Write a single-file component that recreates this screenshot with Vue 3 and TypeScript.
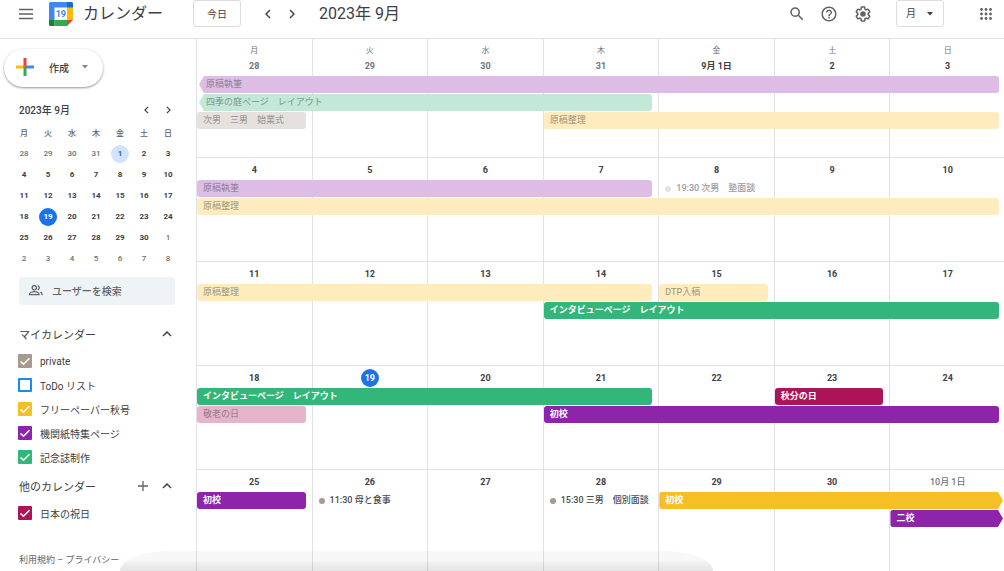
<script setup lang="ts">
import { ref } from 'vue'

type Tone = 'purple' | 'green' | 'taupe' | 'yellow' | 'pink' | 'crimson'

interface CalEvent {
  title: string
  tone: Tone
  start: number
  span: number
  lane: number
  past?: boolean
  timed?: boolean
  fromBefore?: boolean
  toAfter?: boolean
}

interface Week {
  days: string[]
  events: CalEvent[]
}

interface CalendarEntry {
  id: string
  name: string
  tone: Tone | 'blue'
  checked: boolean
}

const weekdays = ['月', '火', '水', '木', '金', '土', '日']

const weeks: Week[] = [
  {
    days: ['28', '29', '30', '31', '9月 1日', '2', '3'],
    events: [
      { title: '原稿執筆', tone: 'purple', start: 1, span: 7, lane: 1, past: true, fromBefore: true },
      { title: '四季の庭ページ　レイアウト', tone: 'green', start: 1, span: 4, lane: 2, past: true, fromBefore: true },
      { title: '次男　三男　始業式', tone: 'taupe', start: 1, span: 1, lane: 3, past: true },
      { title: '原稿整理', tone: 'yellow', start: 4, span: 4, lane: 3, past: true },
    ],
  },
  {
    days: ['4', '5', '6', '7', '8', '9', '10'],
    events: [
      { title: '原稿執筆', tone: 'purple', start: 1, span: 4, lane: 1, past: true },
      { title: '19:30 次男　塾面談', tone: 'taupe', start: 5, span: 1, lane: 1, past: true, timed: true },
      { title: '原稿整理', tone: 'yellow', start: 1, span: 7, lane: 2, past: true },
    ],
  },
  {
    days: ['11', '12', '13', '14', '15', '16', '17'],
    events: [
      { title: '原稿整理', tone: 'yellow', start: 1, span: 4, lane: 1, past: true },
      { title: 'DTP入稿', tone: 'yellow', start: 5, span: 1, lane: 1, past: true },
      { title: 'インタビューページ　レイアウト', tone: 'green', start: 4, span: 4, lane: 2 },
    ],
  },
  {
    days: ['18', '19', '20', '21', '22', '23', '24'],
    events: [
      { title: 'インタビューページ　レイアウト', tone: 'green', start: 1, span: 4, lane: 1 },
      { title: '秋分の日', tone: 'crimson', start: 6, span: 1, lane: 1 },
      { title: '敬老の日', tone: 'pink', start: 1, span: 1, lane: 2, past: true },
      { title: '初校', tone: 'purple', start: 4, span: 4, lane: 2 },
    ],
  },
  {
    days: ['25', '26', '27', '28', '29', '30', '10月 1日'],
    events: [
      { title: '初校', tone: 'purple', start: 1, span: 1, lane: 1 },
      { title: '11:30 母と食事', tone: 'taupe', start: 2, span: 1, lane: 1, timed: true },
      { title: '15:30 三男　個別面談', tone: 'taupe', start: 4, span: 1, lane: 1, timed: true },
      { title: '初校', tone: 'yellow', start: 5, span: 3, lane: 1, toAfter: true },
      { title: '二校', tone: 'purple', start: 7, span: 1, lane: 2, toAfter: true },
    ],
  },
]

const miniWeeks: number[][] = [
  [28, 29, 30, 31, 1, 2, 3],
  [4, 5, 6, 7, 8, 9, 10],
  [11, 12, 13, 14, 15, 16, 17],
  [18, 19, 20, 21, 22, 23, 24],
  [25, 26, 27, 28, 29, 30, 1],
  [2, 3, 4, 5, 6, 7, 8],
]

const myCalendars = ref<CalendarEntry[]>([
  { id: 'private', name: 'private', tone: 'taupe', checked: true },
  { id: 'todo', name: 'ToDo リスト', tone: 'blue', checked: false },
  { id: 'freepaper', name: 'フリーペーパー秋号', tone: 'yellow', checked: true },
  { id: 'bulletin', name: '機関紙特集ページ', tone: 'purple', checked: true },
  { id: 'memorial', name: '記念誌制作', tone: 'green', checked: true },
])

const otherCalendars = ref<CalendarEntry[]>([
  { id: 'holidays', name: '日本の祝日', tone: 'crimson', checked: true },
])

const view = ref('month')
const query = ref('')

function isOutside(week: number, day: number): boolean {
  return (week === 0 && day > 20) || (week >= 4 && day < 10)
}

function isFirst(week: number, day: number): boolean {
  return week === 0 && day === 1
}

function isToday(week: number, day: number): boolean {
  return week === 3 && day === 19
}

function placement(e: CalEvent) {
  return { gridColumn: `${e.start} / span ${e.span}`, gridRow: e.lane + 1 }
}
</script>

<template>
  <div class="app">
    <header class="topbar">
      <div class="brand">
        <button class="icon-btn" aria-label="メインメニュー">
          <svg width="14" height="12" viewBox="0 0 14 12"><path d="M0 1.500h14M0 6h14M0 10.500h14" stroke="#5f6368" stroke-width="1.600" /></svg>
        </button>
        <svg class="logo" width="24" height="24" viewBox="0 0 24 24" aria-hidden="true">
          <path d="M1.500 0H18v6H6v12H0V1.500A1.500 1.500 0 0 1 1.500 0z" fill="#4285f4" />
          <path d="M18 0h4.500A1.500 1.500 0 0 1 24 1.500V6h-6z" fill="#1967d2" />
          <path d="M18 5.500h6V18h-6z" fill="#fbbc04" />
          <path d="M5.500 18H18v6H5.500z" fill="#34a853" />
          <path d="M0 18h5.500v6h-4A1.500 1.500 0 0 1 0 22.500z" fill="#188038" />
          <path d="M18 18h6l-6 6z" fill="#ea4335" />
          <path d="M5.500 5.500H18V18H5.500z" fill="#fff" />
          <text x="11.800" y="15" text-anchor="middle" class="logo-day">19</text>
        </svg>
        <span class="brand-name">カレンダー</span>
      </div>
      <button class="outlined today-btn">今日</button>
      <div class="pager">
        <button class="icon-btn" aria-label="前の月">
          <svg width="6" height="10" viewBox="0 0 6 10"><path d="M5 1 1 5l4 4" class="chev" /></svg>
        </button>
        <button class="icon-btn" aria-label="次の月">
          <svg width="6" height="10" viewBox="0 0 6 10"><path d="M1 1l4 4-4 4" class="chev" /></svg>
        </button>
      </div>
      <h1 class="period">2023年 9月</h1>
      <div class="tools">
        <button class="icon-btn" aria-label="検索">
          <svg width="18" height="18" viewBox="0 0 24 24"><path fill="#5f6368" d="M20.490 19l-5.730-5.730C15.530 12.200 16 10.910 16 9.500A6.500 6.500 0 1 0 9.500 16c1.410 0 2.700-.47 3.770-1.240L19 20.490 20.490 19zM5 9.500C5 7.010 7.010 5 9.500 5S14 7.010 14 9.500 11.990 14 9.500 14 5 11.990 5 9.500z" /></svg>
        </button>
        <button class="icon-btn help" aria-label="サポート">
          <svg width="18" height="18" viewBox="0 0 24 24"><path fill="#5f6368" d="M11 18h2v-2h-2v2zm1-16C6.480 2 2 6.480 2 12s4.480 10 10 10 10-4.480 10-10S17.520 2 12 2zm0 18c-4.410 0-8-3.590-8-8s3.590-8 8-8 8 3.590 8 8-3.590 8-8 8zm0-14c-2.210 0-4 1.790-4 4h2c0-1.100.9-2 2-2s2 .9 2 2c0 2-3 1.750-3 5h2c0-2.250 3-2.500 3-5 0-2.210-1.790-4-4-4z" /></svg>
        </button>
        <button class="icon-btn settings" aria-label="設定">
          <svg width="18" height="18" viewBox="0 0 24 24"><path fill="#5f6368" d="M13.850 22.250h-3.700c-.74 0-1.360-.54-1.450-1.270l-.27-1.890c-.27-.14-.53-.29-.79-.46l-1.800.72c-.7.26-1.470-.03-1.810-.65L2.200 15.530c-.35-.66-.2-1.440.36-1.880l1.530-1.190c-.01-.15-.02-.3-.02-.46 0-.15.01-.31.02-.46l-1.520-1.190c-.59-.45-.74-1.260-.37-1.880l1.850-3.190c.34-.62 1.110-.9 1.790-.63l1.810.73c.26-.17.52-.32.78-.46l.27-1.910c.09-.7.71-1.250 1.440-1.250h3.700c.74 0 1.360.54 1.450 1.270l.27 1.890c.27.14.53.29.79.46l1.800-.72c.71-.26 1.480.03 1.820.65l1.840 3.180c.36.66.2 1.440-.36 1.880l-1.520 1.190c.01.15.02.3.02.46s-.01.31-.02.46l1.520 1.190c.56.45.72 1.230.37 1.860l-1.860 3.220c-.34.62-1.110.9-1.800.63l-1.800-.72c-.26.17-.52.32-.78.46l-.27 1.910c-.1.680-.72 1.220-1.460 1.220zm-3.230-2h2.760l.37-2.550.53-.22c.44-.18.880-.44 1.340-.78l.45-.34 2.380.96 1.380-2.400-2.030-1.580.07-.56c.03-.26.06-.51.06-.78s-.03-.53-.06-.78l-.07-.56 2.030-1.580-1.390-2.400-2.390.96-.45-.35c-.42-.32-.87-.58-1.330-.77l-.52-.22-.37-2.550h-2.760l-.37 2.550-.53.21c-.44.19-.88.44-1.340.79l-.45.33-2.380-.95-1.390 2.390 2.030 1.580-.07.56a7 7 0 0 0-.06.79c0 .26.02.53.06.78l.07.56-2.030 1.580 1.380 2.400 2.390-.96.45.35c.43.33.86.58 1.330.77l.53.22.38 2.550z" /><circle cx="12" cy="12" r="3.700" fill="#5f6368" /></svg>
        </button>
        <div class="view-picker">
          <select v-model="view" class="outlined" aria-label="表示形式">
            <option value="month">月</option>
            <option value="week">週</option>
          </select>
          <svg class="caret" width="6" height="4" viewBox="0 0 6 4"><path d="M0 0h6L3 3.500z" fill="#3c4043" /></svg>
        </div>
        <button class="icon-btn apps" aria-label="アプリ">
          <svg width="12" height="12" viewBox="0 0 12 12" fill="#5f6368">
            <template v-for="r in 3" :key="r">
              <circle v-for="c in 3" :key="c" :cx="c * 4.5 - 3" :cy="r * 4.5 - 3" r="1.400" />
            </template>
          </svg>
        </button>
      </div>
    </header>

    <div class="body">
      <aside class="sidebar">
        <button class="create">
          <svg width="18" height="18" viewBox="0 0 18 18" aria-hidden="true">
            <path d="M7.500 0h3v9h-3z" fill="#ea4335" />
            <path d="M9 7.500h9v3H9z" fill="#4285f4" />
            <path d="M7.500 9h3v9h-3z" fill="#34a853" />
            <path d="M0 7.500h10.500l-3 3H0z" fill="#fbbc04" />
            <path d="M7.500 7.500h3l-3 3z" fill="#ea4335" />
          </svg>
          <span>作成</span>
          <svg width="6" height="4" viewBox="0 0 6 4"><path d="M0 0h6L3 3.500z" fill="#80868b" /></svg>
        </button>

        <div class="mini-head">
          <h2>2023年 9月</h2>
          <button class="icon-btn" aria-label="前月">
            <svg width="5" height="8" viewBox="0 0 6 10"><path d="M5 1 1 5l4 4" class="chev" /></svg>
          </button>
          <button class="icon-btn" aria-label="翌月">
            <svg width="5" height="8" viewBox="0 0 6 10"><path d="M1 1l4 4-4 4" class="chev" /></svg>
          </button>
        </div>
        <table class="mini">
          <thead>
            <tr><th v-for="d in weekdays" :key="d" scope="col">{{ d }}</th></tr>
          </thead>
          <tbody>
            <tr v-for="(week, w) in miniWeeks" :key="w">
              <td v-for="day in week" :key="day">
                <button :class="{ outside: isOutside(w, day), first: isFirst(w, day), today: isToday(w, day) }">{{ day }}</button>
              </td>
            </tr>
          </tbody>
        </table>

        <label class="people">
          <svg width="16" height="16" viewBox="0 0 24 24" fill="none" stroke="#5f6368" stroke-width="1.900" aria-hidden="true">
            <circle cx="9.500" cy="7" r="3.200" />
            <path d="M2.500 17.500v-1.200c0-2 4-3.300 7-3.300s7 1.300 7 3.300v1.200z" />
            <path d="M14.500 3.900a3.200 3.200 0 0 1 0 6.200M18.500 13.500c1.500.7 2.500 1.600 2.500 2.800v2.200" />
          </svg>
          <input v-model="query" type="text" placeholder="ユーザーを検索" aria-label="ユーザーを検索" />
        </label>

        <section class="group">
          <div class="group-head">
            <h3>マイカレンダー</h3>
            <button class="icon-btn" aria-label="マイカレンダーを閉じる">
              <svg width="10" height="6" viewBox="0 0 10 6"><path d="M1 5l4-4 4 4" class="chev" /></svg>
            </button>
          </div>
          <ul>
            <li v-for="c in myCalendars" :key="c.id">
              <label>
                <span class="box" :class="c.tone">
                  <input v-model="c.checked" type="checkbox" />
                  <svg v-if="c.checked" width="14" height="14" viewBox="0 0 14 14"><path d="M2.500 7.500l3 2.700 6-6" /></svg>
                </span>
                {{ c.name }}
              </label>
            </li>
          </ul>
        </section>

        <section class="group other">
          <div class="group-head">
            <h3>他のカレンダー</h3>
            <button class="icon-btn" aria-label="他のカレンダーを追加">
              <svg width="10" height="10" viewBox="0 0 10 10"><path d="M5 0v10M0 5h10" class="plus" /></svg>
            </button>
            <button class="icon-btn" aria-label="他のカレンダーを閉じる">
              <svg width="10" height="6" viewBox="0 0 10 6"><path d="M1 5l4-4 4 4" class="chev" /></svg>
            </button>
          </div>
          <ul>
            <li v-for="c in otherCalendars" :key="c.id">
              <label>
                <span class="box" :class="c.tone">
                  <input v-model="c.checked" type="checkbox" />
                  <svg v-if="c.checked" width="14" height="14" viewBox="0 0 14 14"><path d="M2.500 7.500l3 2.700 6-6" /></svg>
                </span>
                {{ c.name }}
              </label>
            </li>
          </ul>
        </section>

        <footer class="legal"><a href="#terms">利用規約</a> – <a href="#privacy">プライバシー</a></footer>
      </aside>

      <main class="month">
        <div class="names">
          <span v-for="d in weekdays" :key="d">{{ d }}</span>
        </div>
        <div v-for="(week, w) in weeks" :key="w" class="week">
          <div v-for="(day, i) in week.days" :key="day" class="cell" :style="{ gridColumn: i + 1 }">
            <span
              class="date"
              :class="{
                today: w === 3 && i === 1,
                faded: (w === 0 && i < 4) || (w === 4 && i === 6),
              }"
            >{{ day }}</span>
          </div>
          <button
            v-for="(e, k) in week.events"
            :key="'e' + k"
            class="event"
            :class="[e.tone, { past: e.past, timed: e.timed, before: e.fromBefore, after: e.toAfter }]"
            :style="placement(e)"
          >
            <i v-if="e.timed" class="dot"></i>{{ e.title }}
          </button>
        </div>
      </main>
    </div>
    <div class="dock-shade" aria-hidden="true"></div>
  </div>
</template>

<style>
body {
  margin: 0;
  background: #fff;
}
</style>

<style scoped>
.app {
  position: relative;
  display: flex;
  flex-direction: column;
  min-height: 100vh;
  overflow: hidden;
  font-family: Roboto, "Noto Sans CJK JP", sans-serif;
  font-size: 10px;
  color: #3c4043;
}
.app *,
.app {
  box-sizing: border-box;
}
button,
input,
select {
  font: inherit;
  color: inherit;
}
button {
  padding: 0;
  border: 0;
  background: none;
  cursor: pointer;
}
svg {
  display: block;
  flex: none;
}
h1,
h2,
h3,
ul {
  margin: 0;
  padding: 0;
  font-weight: 400;
  list-style: none;
}
.icon-btn {
  display: grid;
  place-items: center;
  flex: none;
  width: 24px;
  height: 24px;
}
.chev {
  fill: none;
  stroke: #444746;
  stroke-width: 1.500;
}
.plus {
  fill: none;
  stroke: #5f6368;
  stroke-width: 1.300;
}

.topbar {
  display: flex;
  align-items: center;
  height: 39px;
  padding-bottom: 11px;
  border-bottom: 1px solid #dfe1e8;
}
.brand {
  display: flex;
  align-items: center;
  flex: none;
  width: 193px;
  padding-left: 14px;
}
.logo {
  margin: 0 10px 0 11px;
}
.logo-day {
  font: 700 9px Roboto, sans-serif;
  fill: #4285f4;
}
.brand-name {
  font-size: 16px;
  line-height: 24px;
  color: #3c4043;
}
.outlined {
  width: 48px;
  height: 27px;
  border: 1px solid #dadce0;
  border-radius: 3px;
  background: #fff;
}
.today-btn {
  flex: none;
}
.pager {
  display: flex;
  margin-left: 15px;
}
.period {
  margin-left: 15px;
  font-size: 16px;
  line-height: 24px;
  white-space: nowrap;
}
.tools {
  display: flex;
  align-items: center;
  margin-left: auto;
  padding-right: 6px;
}
.help {
  margin-left: 8px;
}
.settings {
  margin-left: 10px;
}
.view-picker {
  display: grid;
  align-items: center;
  margin: 0 30px 0 21px;
}
.view-picker > * {
  grid-area: 1 / 1;
}
.view-picker select {
  appearance: none;
  padding: 0 9px;
}
.caret {
  justify-self: end;
  margin-right: 11px;
  pointer-events: none;
}

.body {
  display: flex;
  flex: 1;
}
.sidebar {
  flex: none;
  width: 196px;
}
.create {
  display: flex;
  align-items: center;
  width: 99px;
  height: 38px;
  margin: 10px 0 0 4px;
  padding: 0 0 2px 12px;
  border-radius: 19px;
  background: #fff;
  box-shadow: 0 1px 2px rgba(60, 64, 67, 0.4), 0 1px 3px rgba(60, 64, 67, 0.2);
  font-weight: 500;
}
.create span {
  margin: 0 13px 0 15px;
}
.mini-head {
  display: flex;
  align-items: center;
  height: 21px;
  margin: 12px 0 2px;
  padding: 0 17px 0 19px;
}
.mini-head h2 {
  flex: 1;
  font-size: 10px;
  font-weight: 500;
}
.mini-head .icon-btn {
  width: 22px;
}
.mini {
  width: 168px;
  margin-left: 12px;
  border-collapse: collapse;
  table-layout: fixed;
  font-size: 8px;
  text-align: center;
}
.mini th,
.mini td {
  height: 21px;
  padding: 0;
  font-weight: 500;
}
.mini th {
  color: #5f6368;
}
.mini button {
  width: 18px;
  height: 18px;
  border-radius: 50%;
  font-weight: 700;
  line-height: 18px;
  vertical-align: middle;
}
.mini .outside {
  color: #6b6f73;
  font-weight: 500;
}
.mini .first {
  background: #d2e3fc;
  color: #1967d2;
}
.mini .today {
  background: #1a73e8;
  color: #fff;
}
.people {
  display: flex;
  align-items: center;
  height: 28px;
  margin: 8px 21px 0 19px;
  padding: 0 9px;
  border-radius: 3px;
  background: #eef3f6;
}
.people input {
  flex: 1;
  min-width: 0;
  margin-left: 8px;
  padding: 0;
  border: 0;
  outline: 0;
  background: none;
  font-weight: 500;
}
.people input::placeholder {
  color: #5f6368;
  opacity: 1;
}
.group {
  margin-top: 17px;
}
.group.other {
  margin-top: 5px;
}
.group-head {
  display: flex;
  align-items: center;
  height: 24px;
  padding: 0 17px 0 19px;
  margin-bottom: 3px;
}
.group-head h3 {
  flex: 1;
  font-size: 11px;
}
.group li label {
  display: flex;
  align-items: center;
  gap: 8px;
  height: 24px;
  padding-left: 18px;
}
.box {
  display: grid;
  width: 14px;
  height: 14px;
}
.box > * {
  grid-area: 1 / 1;
}
.box input {
  appearance: none;
  width: 14px;
  height: 14px;
  margin: 0;
  border: 2px solid var(--tone);
  border-radius: 1px;
}
.box input:checked {
  background: var(--tone);
}
.box svg {
  fill: none;
  stroke: #fff;
  stroke-width: 1.600;
  pointer-events: none;
}
.legal {
  margin: 27px 0 0 19px;
  font-size: 9px;
  line-height: 16px;
  color: #5f6368;
}
.legal a {
  color: inherit;
  text-decoration: none;
}

.purple {
  --tone: #8e24aa;
  --soft: #ddbde6;
}
.green {
  --tone: #33b679;
  --soft: #c2e9d7;
}
.taupe {
  --tone: #a79b8e;
  --soft: #e5e1dd;
}
.yellow {
  --tone: #f6bf26;
  --soft: #feecbe;
}
.pink {
  --tone: #d81b60;
  --soft: #e6b4cb;
}
.crimson {
  --tone: #ad1457;
  --soft: #e6b4cb;
}
.blue {
  --tone: #1a8cf0;
}

.month {
  display: flex;
  flex-direction: column;
  flex: 1;
  min-width: 0;
  margin: 0 -1px -2px 0;
}
.names {
  display: grid;
  grid-template-columns: repeat(7, 1fr);
  height: 14px;
}
.names span {
  padding-top: 6px;
  border-left: 1px solid #e0e2e6;
  font-size: 8px;
  line-height: 12px;
  text-align: center;
  color: #70757a;
}
.week {
  display: grid;
  flex: 1;
  grid-template-columns: repeat(7, minmax(0, 1fr));
  grid-template-rows: 23px 18px 18px 18px 1fr;
  min-height: 100px;
}
.cell {
  grid-row: 1 / -1;
  border-left: 1px solid #e0e2e6;
  text-align: center;
}
.week + .week .cell {
  border-top: 1px solid #e0e2e6;
}
.names + .week .cell {
  padding-top: 1px;
}
.date {
  display: inline-block;
  min-width: 18px;
  height: 18px;
  margin-top: 3px;
  border-radius: 9px;
  font-size: 9px;
  font-weight: 700;
  line-height: 18px;
}
.date.faded {
  color: #70757a;
}
.week:last-child .date.faded {
  font-weight: 500;
}
.date.today {
  background: #1a73e8;
  color: #fff;
}
.event {
  display: flex;
  align-items: center;
  height: 17px;
  margin: 0 6px 0 1px;
  padding-left: 6px;
  border-radius: 3px;
  background: var(--tone);
  color: #fff;
  font-size: 9px;
  font-weight: 700;
  line-height: 17px;
  white-space: nowrap;
}
.event.past {
  background: var(--soft);
  color: rgba(60, 64, 67, 0.45);
  font-weight: 500;
}
.event.before {
  margin-left: 3px;
  padding-left: 7px;
  clip-path: polygon(0 50%, 5px 0, 100% 0, 100% 100%, 5px 100%);
}
.event.after {
  margin-right: 2px;
  clip-path: polygon(0 0, calc(100% - 5px) 0, 100% 50%, calc(100% - 5px) 100%, 0 100%);
}
.event.timed {
  margin-right: 0;
  background: none;
  color: #4a4d51;
  font-weight: 500;
}
.event.timed.past {
  color: #9a9da0;
}
.dot {
  width: 6px;
  height: 6px;
  margin-right: 5px;
  border-radius: 50%;
  background: var(--tone);
}
.past .dot {
  background: var(--soft);
}
.dock-shade {
  position: absolute;
  right: 29%;
  bottom: 0;
  left: 12%;
  height: 20px;
  border-radius: 50px 50px 0 0 / 20px 20px 0 0;
  background: linear-gradient(rgba(60, 64, 60, 0.04) 45%, rgba(60, 64, 60, 0.09) 65%, rgba(60, 64, 60, 0.14));
  pointer-events: none;
}
</style>
